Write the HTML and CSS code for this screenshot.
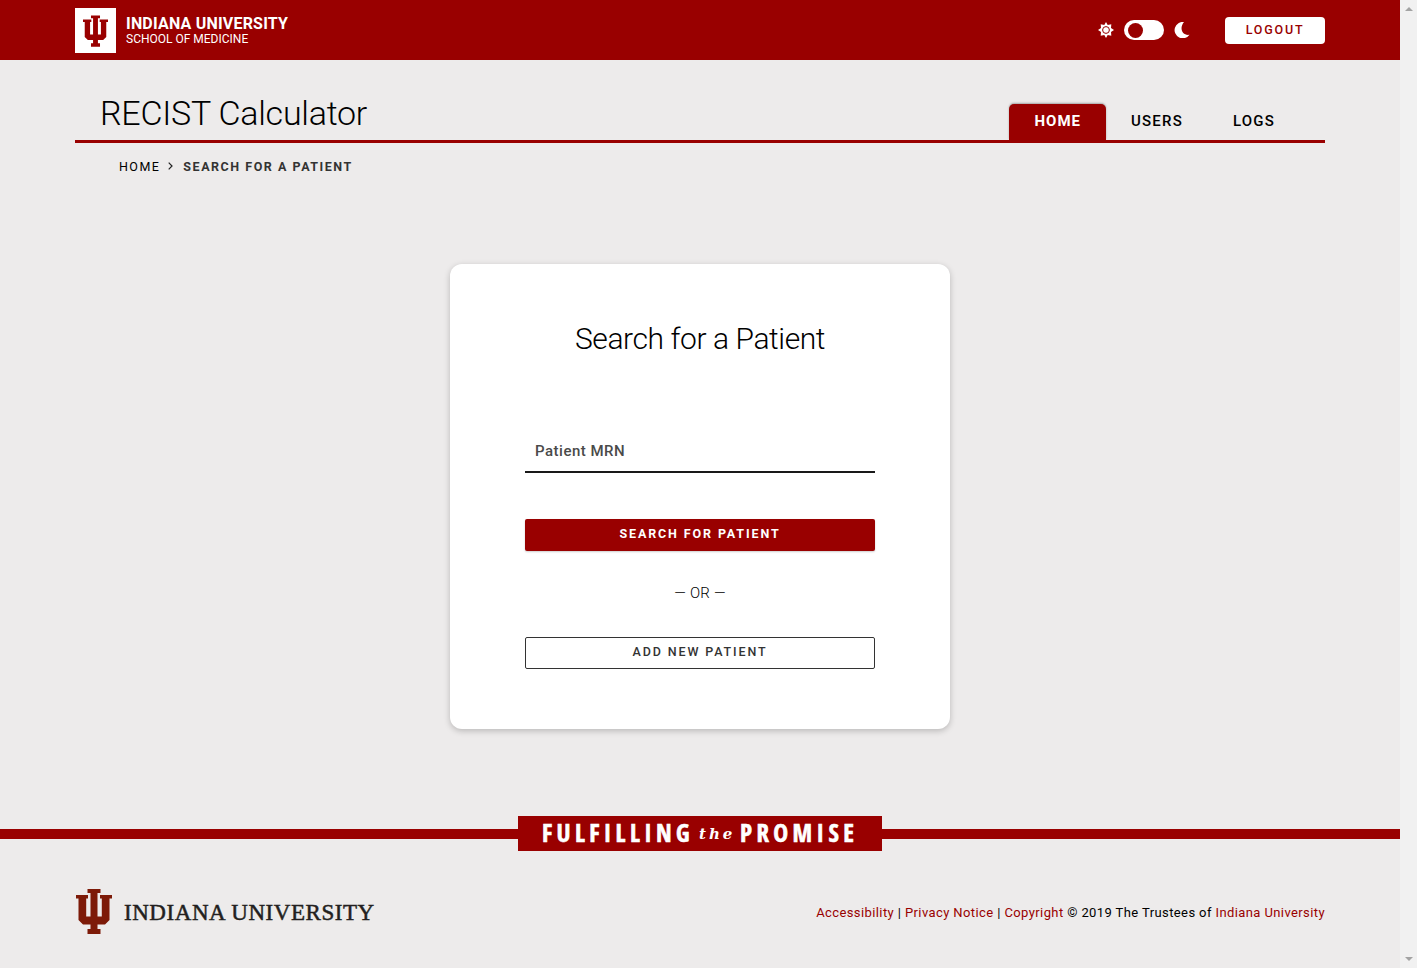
FILE: index.html
```
<!DOCTYPE html>
<html lang="en">
<head>
<meta charset="utf-8">
<title>RECIST Calculator</title>
<link rel="stylesheet" href="styles.css">
</head>
<body>
<svg class="symbols" aria-hidden="true">
  <symbol id="trident" viewBox="0 0 36 45">
    <path d="M11.500 0h13v4h-3v23.500h4.300V9.500H24V6h12v3.500h-2.500V31l-4.500 4.500h-7.500v4.500h3v5h-13v-5h3v-4.500H7L2.500 31V9.500H0V6h12v3.500h-1.800v18h4.300V4h-3z"/>
  </symbol>
</svg>
<div class="window">
  <div class="page">
    <header class="brand-bar">
      <div class="wrap brand-row">
        <a class="brand">
          <span class="brand-tile"><svg class="brand-mark"><use href="#trident"/></svg></span>
          <span class="brand-text"><strong class="brand-name">INDIANA UNIVERSITY</strong><span class="brand-school">SCHOOL OF MEDICINE</span></span>
        </a>
        <div class="tools">
          <svg class="sun" viewBox="0 0 16 16">
            <path d="M8 0l1.700 3L13.300 2.300 13 6l3 2-3 2 .3 3.700-3.600-.7L8 16l-1.700-3-3.600.7L3 10 0 8l3-2-.3-3.700 3.600.7z" fill="#fff"/>
            <circle cx="8" cy="8" r="3.400" fill="none" stroke="#900" stroke-width="1"/>
          </svg>
          <span class="switch"><span class="knob"></span></span>
          <svg class="moon" viewBox="0 0 16 16"><path d="M10 0A8.200 8.200 0 1 0 15.500 12.800C8 14 5 6 10 0z" fill="#fff"/></svg>
          <button class="logout">LOGOUT</button>
        </div>
      </div>
    </header>
    <div class="wrap title-row">
      <h1 class="title">RECIST Calculator</h1>
      <nav class="tabs"><a class="tab tab-active">HOME</a><a class="tab">USERS</a><a class="tab">LOGS</a></nav>
    </div>
    <div class="wrap crumbs">
      <a class="crumb">HOME</a>
      <svg class="chevron" viewBox="0 0 5 8"><path d="M.7.7L4 4 .7 7.300" fill="none" stroke="#222" stroke-width="1.200"/></svg>
      <span class="crumb-current">SEARCH FOR A PATIENT</span>
    </div>
    <main class="card">
      <h2 class="card-title">Search for a Patient</h2>
      <div class="field">Patient MRN</div>
      <button class="btn btn-primary">SEARCH FOR PATIENT</button>
      <div class="or">— OR —</div>
      <button class="btn btn-outline">ADD NEW PATIENT</button>
    </main>
    <div class="promise">
      <span class="rule"></span>
      <div class="promise-box"><span class="fulfilling">FULFILLING</span><em class="the">the</em><span class="promise-word">PROMISE</span></div>
      <span class="rule"></span>
    </div>
    <footer class="wrap footer">
      <div class="signature"><svg class="footer-mark"><use href="#trident"/></svg><span class="university">INDIANA UNIVERSITY</span></div>
      <div class="legal"><a>Accessibility</a> | <a>Privacy Notice</a> | <a>Copyright</a> © 2019 The Trustees of <a>Indiana University</a></div>
    </footer>
  </div>
  <div class="scrollbar"><span class="arrow-up"></span><span class="arrow-down"></span></div>
</div>
</body>
</html>
```
FILE: styles.css
```
* { box-sizing: border-box; }
body { margin: 0; background: #edebeb; color: #000; font-family: Roboto, "Liberation Sans", sans-serif; }
h1, h2 { margin: 0; font-weight: 300; }
button { font-family: inherit; padding: 0; border: 0; }
.symbols { display: none; }
.window { display: flex; width: 1417px; height: 968px; overflow: hidden; }
.page { width: 1400px; display: flex; flex-direction: column; }
.wrap { width: 1250px; margin: 0 auto; display: flex; white-space: nowrap; }

.brand-bar { height: 60px; background: #900; color: #fff; }
.brand-row { justify-content: space-between; height: 60px; }
.brand { display: flex; padding-top: 8px; gap: 10px; }
.brand-tile { width: 41px; height: 45px; background: #fff; display: flex; align-items: center; justify-content: center; }
.brand-mark { width: 25px; height: 32px; fill: #900; }
.brand-text { display: flex; flex-direction: column; padding-top: 7px; }
.brand-name { font-size: 16px; line-height: 17px; letter-spacing: .2px; }
.brand-school { font-size: 12px; line-height: 14px; letter-spacing: 0; }
.tools { display: flex; align-items: center; }
.sun { width: 16px; height: 16px; margin-right: 10px; }
.switch { width: 40px; height: 20px; border-radius: 10px; background: #fff; padding: 2.500px 4px; margin-right: 10px; }
.knob { display: block; width: 15px; height: 15px; border-radius: 50%; background: #900; }
.moon { width: 16px; height: 16px; margin-right: 35px; }
.logout { width: 100px; height: 27px; border-radius: 4px; background: #fff; color: #900; font-size: 12.500px; font-weight: 500; line-height: 25px; padding-bottom: 2px; letter-spacing: 1.800px; }

.title-row { height: 83px; border-bottom: 3px solid #900; justify-content: space-between; padding: 0 25px; }
.title { font-size: 34px; line-height: 40px; padding-top: 33px; letter-spacing: -.25px; }
.tabs { display: flex; padding-top: 44px; }
.tab { height: 36px; padding: 0 25px; font-size: 15px; line-height: 34px; font-weight: 500; letter-spacing: 1.200px; }
.tab-active { padding-left: 25.500px; color: #fff; background: #900; border-radius: 5px 5px 0 0; font-weight: 700; letter-spacing: 1px; box-shadow: 0 -1px 2px rgba(0,0,0,.3); }

.crumbs { height: 46px; align-items: center; padding-left: 44px; font-size: 12.500px; letter-spacing: 1.450px; }
.chevron { width: 5px; height: 8px; margin: 0 10px 0 8px; }
.crumb-current { font-weight: 700; color: #333; letter-spacing: 1.530px; }

.card { width: 500px; height: 465px; margin: 75px auto 0; border-radius: 12px; background: #fff; box-shadow: 0 2px 6px rgba(0,0,0,.22); padding: 55px 75px 0; display: flex; flex-direction: column; }
.card-title { font-size: 30px; line-height: 40px; text-align: center; letter-spacing: -.42px; }
.field { margin-top: 72px; height: 42px; border-bottom: 2px solid #191919; padding-left: 10px; line-height: 40px; font-size: 15px; font-weight: 500; color: #4a4a4a; letter-spacing: .5px; }
.btn { height: 32px; border-radius: 2px; font-size: 12.500px; font-weight: 700; letter-spacing: 1.880px; padding-bottom: 3px; }
.btn-primary { margin-top: 46px; background: #900; color: #fff; box-shadow: 0 1px 2px rgba(0,0,0,.2); }
.or { height: 86px; line-height: 84px; text-align: center; font-size: 15px; font-weight: 300; letter-spacing: .2px; }
.btn-outline { border: 1px solid #333; background: #fff; color: #333; font-weight: 500; }

.promise { display: flex; align-items: center; height: 35px; margin-top: 87px; }
.rule { flex: 1; height: 10px; background: #900; }
.promise-box { width: 364px; height: 35px; background: #900; color: #fff; display: flex; align-items: baseline; padding-left: 24px; line-height: 33px; font-family: "Open Sans Condensed", Roboto, sans-serif; font-weight: 700; font-size: 25px; white-space: nowrap; }
.fulfilling { width: 157px; letter-spacing: 4.300px; -webkit-text-stroke: .6px #fff; }
.the { width: 41px; font: italic 700 15px/20px "DejaVu Serif", serif; letter-spacing: 3px; transform: translateY(-3px); }
.promise-word { letter-spacing: 4.400px; -webkit-text-stroke: .6px #fff; }

.footer { justify-content: space-between; padding-top: 38px; }
.signature { display: flex; align-items: center; height: 45px; padding-left: 1px; gap: 12px; }
.footer-mark { width: 36px; height: 45px; fill: #7d1a08; }
.university { padding-top: 2px; font: 23px/45px "Liberation Serif", serif; color: #231f20; letter-spacing: .55px; -webkit-text-stroke: .5px #231f20; }
.legal { font-size: 13px; line-height: 47px; letter-spacing: .4px; }
.legal a { color: #900; }

.scrollbar { width: 17px; background: #f1f1f1; display: flex; flex-direction: column; justify-content: space-between; align-items: center; padding: 7px 0; }
.arrow-up { border: 4px solid transparent; border-top: 0; border-bottom-color: #a3a3a3; }
.arrow-down { border: 4px solid transparent; border-bottom: 0; border-top-color: #a3a3a3; }
```
